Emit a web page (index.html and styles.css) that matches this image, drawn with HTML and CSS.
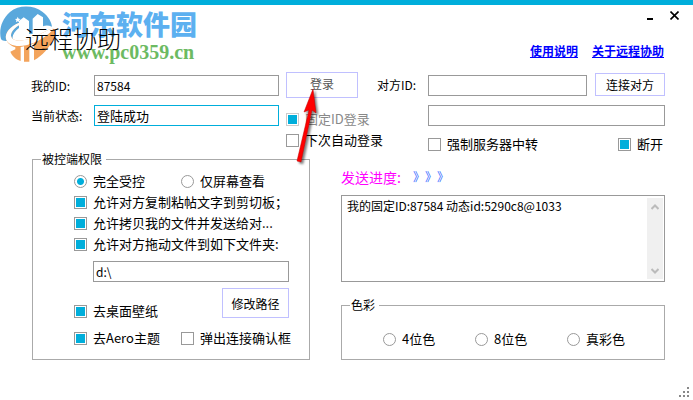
FILE: index.html
```html
<!DOCTYPE html>
<html lang="zh-CN">
  <head>
    <meta charset="UTF-8" />
    <meta name="viewport" content="width=device-width, initial-scale=1.0" />
    <title>远程协助</title>
    <link rel="stylesheet" href="styles.css">
  </head>
  <body>
    <div class="window">
      <header class="titlebar">
        <h1 class="title">远程协助</h1>
        <div class="titlebar-right">
          <div class="window-buttons">
            <button class="win-btn" type="button" aria-label="最小化">
              <svg width="9" height="9" viewBox="0 0 9 9"><path d="M1 8H7" stroke="#000" stroke-width="2" /></svg>
            </button>
            <button class="win-btn" type="button" aria-label="关闭">
              <svg width="9" height="9" viewBox="0 0 9 9"><path d="M0.5 0.5L8.5 8.5M8.5 0.5L0.5 8.5" stroke="#000" stroke-width="1.6" /></svg>
            </button>
          </div>
          <nav class="links">
            <a href="#help">使用说明</a>
            <a href="#about">关于远程协助</a>
          </nav>
        </div>
        <div class="watermark">
          <svg class="mark-logo" width="55" height="56" viewBox="0 0 165 168">
            <path d="M3 99C-4 74 4 40 30 18C56-4 100-4 128 18C146 32 154 48 156 62C146 58 136 58 129 61V34L113 24L98 38V84H87V45L71 34L57 45V66C44 76 36 88 38 98C24 106 10 108 3 99Z" fill="#5aa8dc" />
            <path d="M18 99C14 80 30 62 57 50V58C40 68 30 82 34 93C40 108 72 107 100 94C130 80 148 67 160 68C168 71 164 88 158 102C146 128 128 148 102 163V112L88 118V167H72V121L62 123V165C46 160 36 149 31 137L46 130V124C32 120 21 110 18 99Z" fill="#f3a45c" />
            <path d="M18 99C14 80 30 62 57 50V58C40 68 30 82 34 93C40 108 72 107 100 94C130 80 148 67 160 68C150 82 128 99 100 111C62 127 24 121 18 99Z" fill="#fff" />
            <path d="M53 32L56 38L62 39L57 43L59 49L53 46L48 49L49 43L45 39L51 38Z" fill="#fff" />
          </svg>
          <div class="mark-text">
            <span class="mark-name">河东软件园</span>
            <span class="mark-url">www.pc0359.cn</span>
          </div>
        </div>
      </header>

      <main class="content">
        <section class="top">
          <div class="login">
            <div class="login-fields">
              <label for="my-id">我的ID:</label>
              <input class="text-box" id="my-id" type="text" value="87584" />
              <label for="status">当前状态:</label>
              <input class="text-box focused" id="status" type="text" value="登陆成功" />
            </div>
            <div class="login-side">
              <button class="btn login-btn" type="button">登录</button>
              <label class="option disabled"><input type="checkbox" checked disabled />固定ID登录</label>
              <label class="option"><input type="checkbox" />下次自动登录</label>
            </div>
            <svg class="pointer" width="30" height="84" viewBox="0 0 30 84">
              <path d="M18 4L9 27L14 25L2 76L6 77L17 25L21 28Z" fill="#f00" stroke="#b00" stroke-width="0.5" />
            </svg>
          </div>

          <div class="remote">
            <label for="peer-id">对方ID:</label>
            <input class="text-box" id="peer-id" type="text" />
            <button class="btn" type="button">连接对方</button>
            <input class="text-box remote-info" type="text" aria-label="对方状态" />
            <div class="remote-options">
              <label class="option"><input type="checkbox" />强制服务器中转</label>
              <label class="option"><input type="checkbox" checked />断开</label>
            </div>
          </div>
        </section>

        <section class="bottom">
          <fieldset class="group">
            <legend>被控端权限</legend>
            <div class="rights">
              <div class="pair">
                <label class="option"><input type="radio" name="mode" checked />完全受控</label>
                <label class="option"><input type="radio" name="mode" />仅屏幕查看</label>
              </div>
              <label class="option"><input type="checkbox" checked />允许对方复制粘帖文字到剪切板；</label>
              <label class="option"><input type="checkbox" checked />允许拷贝我的文件并发送给对...</label>
              <label class="option"><input type="checkbox" checked />允许对方拖动文件到如下文件夹:</label>
              <input class="text-box path" type="text" value="d:\" aria-label="文件夹" />
              <div class="path-row">
                <label class="option"><input type="checkbox" checked />去桌面壁纸</label>
                <button class="btn path-btn" type="button">修改路径</button>
              </div>
              <div class="pair last">
                <label class="option"><input type="checkbox" checked />去Aero主题</label>
                <label class="option"><input type="checkbox" />弹出连接确认框</label>
              </div>
            </div>
          </fieldset>

          <div class="side">
            <div class="progress">
              <label for="log">发送进度:</label>
              <span class="progress-arrows">》》》</span>
            </div>
            <div class="log">
              <textarea id="log" readonly>我的固定ID:87584 动态id:5290c8@1033</textarea>
              <div class="scrollbar">
                <svg width="8" height="6" viewBox="0 0 8 6"><path d="M0.5 5L4 1.5L7.5 5" fill="none" stroke="#bbb" stroke-width="2" /></svg>
                <svg width="8" height="6" viewBox="0 0 8 6"><path d="M0.5 1L4 4.5L7.5 1" fill="none" stroke="#bbb" stroke-width="2" /></svg>
              </div>
            </div>
            <fieldset class="group">
              <legend>色彩</legend>
              <div class="colors">
                <label class="option"><input type="radio" name="color" />4位色</label>
                <label class="option"><input type="radio" name="color" />8位色</label>
                <label class="option"><input type="radio" name="color" />真彩色</label>
              </div>
            </fieldset>
          </div>
        </section>
      </main>

      <svg class="grip" width="10" height="10" viewBox="0 0 10 10">
        <path d="M8 0h2v2h-2zM4 4h2v2h-2zM8 4h2v2h-2zM0 8h2v2h-2zM4 8h2v2h-2zM8 8h2v2h-2z" fill="#888" />
      </svg>
    </div>

    <script>
      // start with the caret at the end of the status box
      const statusBox = document.querySelector("#status");
      statusBox.focus();
      statusBox.setSelectionRange(statusBox.value.length, statusBox.value.length);
    </script>
  </body>
</html>
```
FILE: styles.css
```css
* {
  box-sizing: border-box;
}

body {
  margin: 0;
  background: #fff;
  color: #000;
  font-family: "Noto Sans CJK SC", sans-serif;
  font-size: 12px;
}

input,
button,
textarea {
  margin: 0;
  font-family: inherit;
  font-size: 12px;
  color: #000;
}

.window {
  position: relative;
  min-height: 100vh;
  border-top: 5px solid #00aedb;
}

.titlebar {
  display: flex;
  justify-content: space-between;
  min-height: 67px;
  padding-left: 25px;
}

.title {
  position: relative;
  z-index: 2;
  margin: 15px 0 0;
  font-size: 24px;
  font-weight: 300;
  line-height: 36px;
}

.titlebar-right {
  display: flex;
  flex-direction: column;
}

.window-buttons {
  display: flex;
  justify-content: flex-end;
  padding: 0 7px 0 0;
}

.win-btn {
  display: flex;
  align-items: center;
  justify-content: center;
  width: 24px;
  height: 20px;
  padding: 0;
  background: none;
  border: none;
}

.links {
  display: flex;
  gap: 14px;
  margin-top: 16px;
  padding-right: 29px;
  line-height: 20px;
}

.links a {
  color: #00f;
  font-weight: bold;
}

/* site mark lying over the title */
.watermark {
  position: absolute;
  top: 1px;
  left: 0;
  display: flex;
  gap: 7px;
  pointer-events: none;
}

.mark-text {
  display: flex;
  flex-direction: column;
}

.mark-name {
  color: #5cb0f0;
  font-size: 27px;
  font-weight: 900;
  line-height: 35px;
}

.mark-url {
  color: #6cba62;
  font-family: "Liberation Serif", serif;
  font-size: 20px;
  font-weight: bold;
  line-height: 22px;
}

.content {
  padding: 0 28px 0 31px;
}

.top {
  display: grid;
  grid-template-columns: 327fr 288fr;
  gap: 19px;
}

.login {
  position: relative;
  display: flex;
  gap: 7px;
}

.login-fields {
  flex: 1;
  display: grid;
  grid-template-columns: 56px 1fr;
  grid-template-rows: 21px 21px;
  gap: 9px 7px;
  align-items: center;
  padding-top: 3px;
}

.login-side {
  display: flex;
  flex-direction: column;
  gap: 3px;
  width: 72px;
}

.text-box {
  width: 100%;
  min-width: 0;
  height: 21px;
  padding: 0 2px;
  border: 1px solid #999;
  border-radius: 0;
  outline: none;
  background: #fff;
}

.text-box.focused {
  border-color: #00aedb;
  font-size: 13px;
}

.btn {
  height: 23px;
  padding: 0;
  border: 1px solid #c0c0ff;
  background: #fff;
  white-space: nowrap;
}

.login-btn {
  height: 26px;
  margin-bottom: 9px;
  padding-bottom: 4px;
  color: #555;
}

.option {
  display: flex;
  align-items: center;
  gap: 6px;
  font-size: 13px;
  line-height: 18px;
  white-space: nowrap;
}

.option.disabled {
  color: #888;
}

.option input {
  appearance: none;
  flex: none;
  width: 13px;
  height: 13px;
  padding: 1px;
  border: 1px solid #999;
  background: #fff;
}

.option input:checked {
  background: #00aedb content-box;
}

.option input:disabled {
  border-color: #ccc;
}

.option input[type="radio"] {
  padding: 2px;
  border-radius: 50%;
}

.option input[type="radio"]:checked {
  background: radial-gradient(circle, #00aedb 3px, #fff 4px);
}

/* red arrow over the login button */
.pointer {
  position: absolute;
  top: 13px;
  left: 264px;
  filter: drop-shadow(2px 2px 1px rgba(0, 0, 0, 0.5));
  pointer-events: none;
}

.remote {
  display: grid;
  grid-template-columns: 43px 1fr 70px;
  gap: 9px 8px;
  align-items: center;
  padding-top: 1px;
  white-space: nowrap;
}

.remote .text-box {
  align-self: end;
}

.remote .remote-info,
.remote-options {
  grid-column: 2 / 4;
}

.remote-options {
  display: flex;
  justify-content: space-between;
  padding-right: 2px;
}

.bottom {
  display: grid;
  grid-template-columns: 278fr 324fr;
  gap: 31px;
  padding-left: 1px;
}

.group {
  min-width: 0;
  margin: 0;
  padding: 0;
  border: 1px solid #aaa;
}

.group legend {
  margin-left: 8px;
  padding: 0 4px 0 1px;
  line-height: 12px;
}

.rights {
  display: flex;
  flex-direction: column;
  gap: 3px;
  padding: 7px 20px 11px 41px;
}

.pair {
  display: grid;
  grid-template-columns: 107px 1fr;
}

.pair.last {
  margin-top: 6px;
}

.path {
  width: auto;
  margin: 5px 0 3px 19px;
}

.path-row {
  display: flex;
  justify-content: space-between;
  align-items: flex-end;
  height: 32px;
}

.path-btn {
  align-self: flex-start;
  width: 67px;
  height: 30px;
}

.progress {
  display: flex;
  gap: 12px;
  margin: 12px 0 6px;
  color: #f0f;
  font-size: 14px;
  line-height: 24px;
}

.progress-arrows {
  color: #36f;
  font-size: 12px;
  text-spacing-trim: space-all;
  font-feature-settings: "chws" 0;
}

.log {
  display: flex;
  height: 87px;
  margin-bottom: 17px;
  padding: 2px 1px 2px 0;
  border: 1px solid #999;
}

.log textarea {
  flex: 1;
  min-width: 0;
  padding: 0 5px;
  border: none;
  outline: none;
  resize: none;
  overflow: hidden;
  line-height: 15px;
}

.scrollbar {
  display: flex;
  flex-direction: column;
  align-items: center;
  justify-content: space-between;
  width: 16px;
  padding: 6px 0 5px;
  background: #f0f0f0;
}

.colors {
  display: grid;
  grid-template-columns: repeat(3, 92px);
  padding: 19px 0 11px 41px;
}

.grip {
  position: absolute;
  right: 4px;
  bottom: 3px;
}
```
